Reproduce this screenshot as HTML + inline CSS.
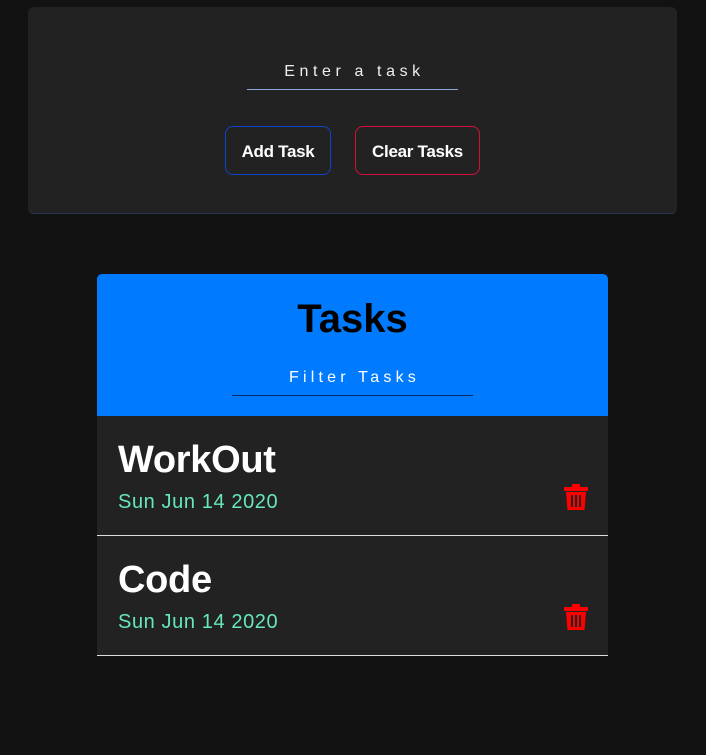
<!DOCTYPE html>
<html><head><style>
*{box-sizing:border-box;margin:0;padding:0}
body{background:#121212;width:706px;height:755px;position:relative;font-family:"Liberation Sans",sans-serif;overflow:hidden}
.card{position:absolute;left:28px;top:7px;width:649px;height:207px;background:#222;border-radius:6px;border-bottom:1px solid #2a3550}
.inp{position:absolute;left:247px;top:58px;width:211px;height:32px;border-bottom:1px solid #8ad;color:#eee;text-align:center;font-size:16px;letter-spacing:4.6px;line-height:28px;text-indent:4px}
.btn{position:absolute;top:126px;height:49px;border-radius:8px;color:#fff;font-weight:bold;font-size:17px;line-height:49px;text-align:center;background:#222;letter-spacing:-0.3px}
.hdr{position:absolute;left:97px;top:274px;width:511px;height:142px;background:#007bff;border-radius:5px 5px 0 0}
.hdr h1{position:absolute;width:100%;top:23px;text-align:center;font-size:40px;color:#000}
.filt{position:absolute;left:135px;top:90px;width:241px;height:32px;border-bottom:1px solid #0a2a6a;color:#fff;text-align:center;font-size:16px;letter-spacing:4.2px;line-height:28px;text-indent:4px}
.item{position:absolute;left:97px;width:511px;height:120px;background:#222;border-bottom:1px solid #ddd}
.item h2{position:absolute;left:21px;top:23px;font-size:38px;color:#fff;font-weight:bold;letter-spacing:-0.3px}
.item .d{position:absolute;left:21px;top:75px;font-size:20px;color:#66e8b8;letter-spacing:0.6px}
.item svg{position:absolute;left:467px;top:68px}
</style></head><body>
<div class="card"></div>
<div class="inp">Enter a task</div>
<div class="btn" style="left:225px;width:106px;border:1px solid #0b45c8">Add Task</div>
<div class="btn" style="left:355px;width:125px;border:1px solid #d4103a">Clear Tasks</div>
<div class="hdr"><h1>Tasks</h1><div class="filt">Filter Tasks</div></div>
<div class="item" style="top:416px"><h2>WorkOut</h2><div class="d">Sun Jun 14 2020</div>
<svg width="24" height="27" viewBox="0 0 24 27"><rect x="0" y="3" width="24" height="4" rx="1" fill="#f00"/><rect x="8" y="0" width="8" height="4" rx="1" fill="#f00"/><path d="M2 8h20l-1.5 18h-17z" fill="#f00"/><rect x="7" y="11" width="2" height="12" fill="#222"/><rect x="11" y="11" width="2" height="12" fill="#222"/><rect x="15" y="11" width="2" height="12" fill="#222"/></svg></div>
<div class="item" style="top:536px"><h2>Code</h2><div class="d">Sun Jun 14 2020</div>
<svg width="24" height="27" viewBox="0 0 24 27"><rect x="0" y="3" width="24" height="4" rx="1" fill="#f00"/><rect x="8" y="0" width="8" height="4" rx="1" fill="#f00"/><path d="M2 8h20l-1.5 18h-17z" fill="#f00"/><rect x="7" y="11" width="2" height="12" fill="#222"/><rect x="11" y="11" width="2" height="12" fill="#222"/><rect x="15" y="11" width="2" height="12" fill="#222"/></svg></div>
</body></html>
